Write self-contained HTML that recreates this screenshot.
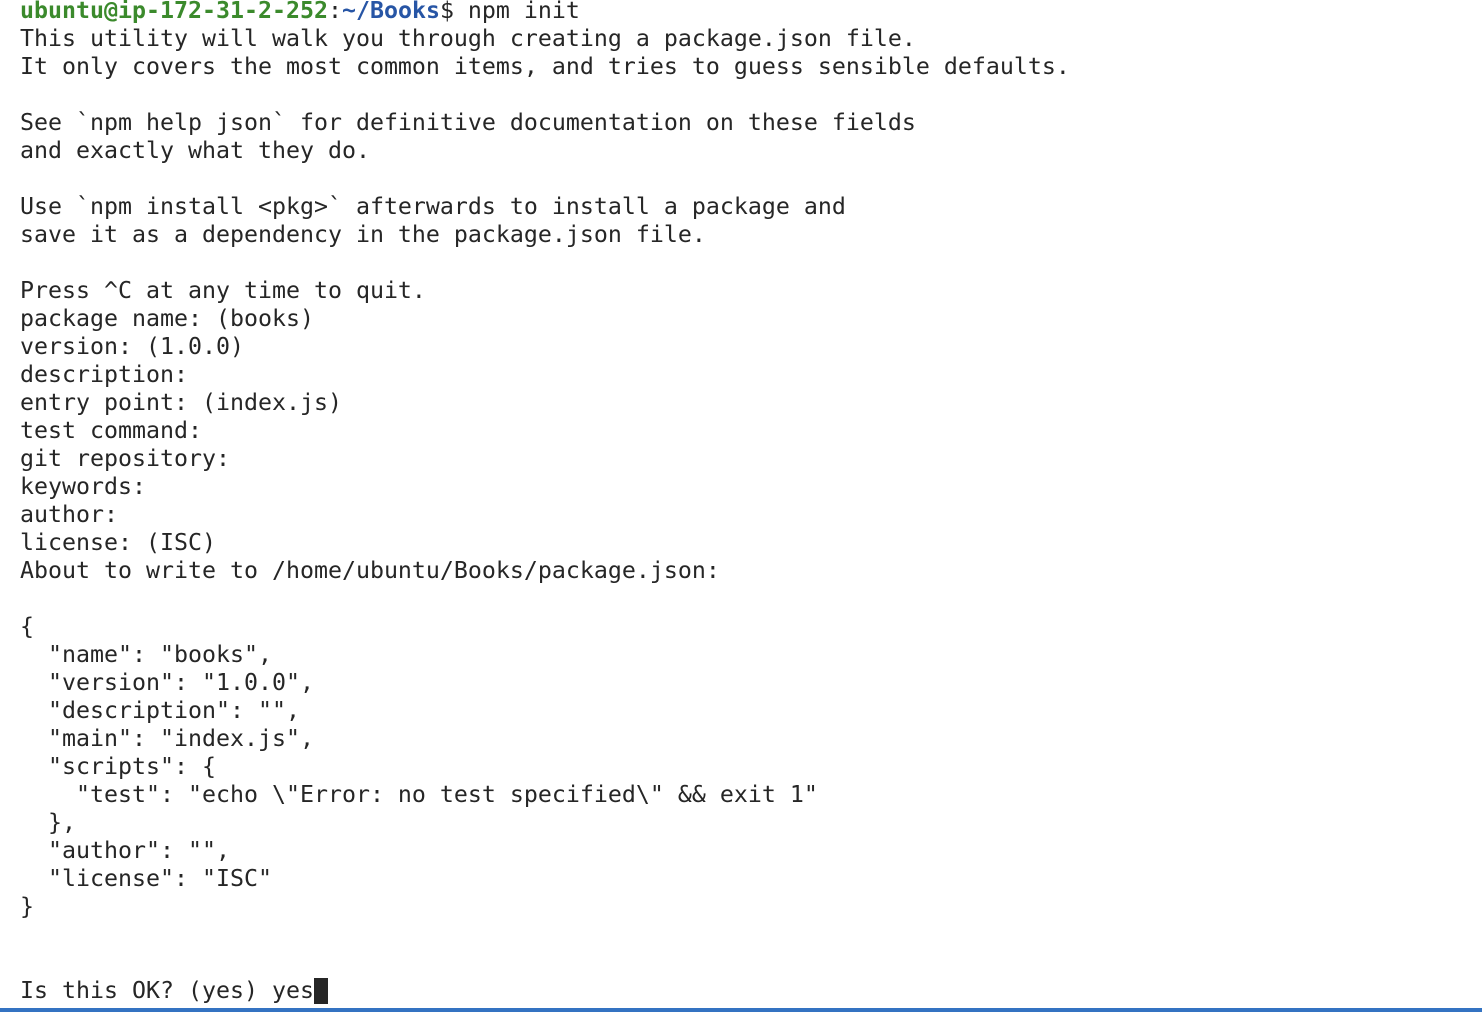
<!DOCTYPE html>
<html><head><style>
html,body{margin:0;padding:0;background:#fff;width:1482px;height:1012px;overflow:hidden;position:relative}
pre{margin:0;position:absolute;left:20px;top:-3px;font-family:"DejaVu Sans Mono","Liberation Mono",monospace;font-size:23.25px;line-height:28px;color:#262626}
.g{color:#3b8a2c;font-weight:bold}.b{color:#2755a5;font-weight:bold}
.cur{display:inline-block;width:14px;height:26px;background:#262626;vertical-align:-6px}
.bar{position:absolute;left:0;top:1008px;width:1482px;height:4px;background:#3473c2}
</style></head><body>
<pre><span class="g">ubuntu@ip-172-31-2-252</span>:<span class="b">~/Books</span>$ npm init
This utility will walk you through creating a package.json file.
It only covers the most common items, and tries to guess sensible defaults.

See `npm help json` for definitive documentation on these fields
and exactly what they do.

Use `npm install &lt;pkg&gt;` afterwards to install a package and
save it as a dependency in the package.json file.

Press ^C at any time to quit.
package name: (books)
version: (1.0.0)
description:
entry point: (index.js)
test command:
git repository:
keywords:
author:
license: (ISC)
About to write to /home/ubuntu/Books/package.json:

{
  "name": "books",
  "version": "1.0.0",
  "description": "",
  "main": "index.js",
  "scripts": {
    "test": "echo \"Error: no test specified\" &amp;&amp; exit 1"
  },
  "author": "",
  "license": "ISC"
}


Is this OK? (yes) yes<span class="cur"></span></pre>
<div class="bar"></div>
</body></html>
